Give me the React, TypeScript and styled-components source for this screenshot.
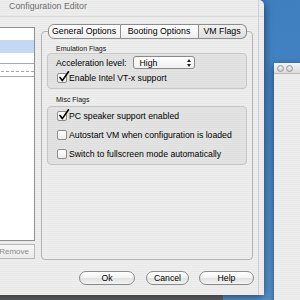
import React from 'react';
import styled, { createGlobalStyle } from 'styled-components';

const Global = createGlobalStyle`
  html, body { margin: 0; padding: 0; }
  body {
    width: 300px; height: 300px; overflow: hidden;
    font-family: "Liberation Sans", Arial, sans-serif;
  }
  #root { width: 300px; height: 300px; }
`;

const Desktop = styled.div`
  position: relative;
  width: 300px;
  height: 300px;
  overflow: hidden;
  background: linear-gradient(180deg, #3f7ebf 0%, #4a89c7 55%, #5796d0 100%);
`;

const pinstripe = `repeating-linear-gradient(180deg, #efefef 0 1px, #e8e8e8 1px 2px)`;

const MainWindow = styled.div`
  position: absolute;
  left: -168px;
  top: 0;
  width: 432px;
  height: 295px;
  display: flex;
  flex-direction: column;
  background: ${pinstripe};
  border-radius: 0 5px 0 0;
  box-shadow: 0 2px 9px rgba(0, 0, 0, 0.55);
  &::after {
    content: '';
    position: absolute;
    top: 0;
    bottom: 0;
    right: 5px;
    width: 1px;
    background: #d0d0d0;
  }
`;

const TitleBar = styled.div`
  height: 13px;
  padding-bottom: 3px;
  display: flex;
  align-items: center;
  justify-content: center;
  border-bottom: 1px solid #dadada;
`;

const Title = styled.span`
  font-size: 8.8px;
  color: #6e6e6e;
  line-height: 13px;
`;

const Body = styled.div`
  flex: 1;
  display: flex;
  flex-direction: column;
  padding: 7px 10px 10px 8px;
`;

const Columns = styled.div`
  display: flex;
  align-items: flex-start;
  gap: 6px;
`;

const Sidebar = styled.div`
  width: 195px;
  margin-top: 3px;
  display: flex;
  flex-direction: column;
  align-items: flex-end;
  gap: 3px;
`;

const List = styled.div`
  width: 100%;
  height: 214px;
  box-sizing: border-box;
  background: #fff;
  border: 1px solid #8e8e8e;
  display: flex;
  flex-direction: column;
`;

const ListRow = styled.div<{ $h: number; $selected?: boolean; $line?: 'solid' | 'dashed' }>`
  height: ${(p) => p.$h}px;
  flex: none;
  background: ${(p) => (p.$selected ? '#c5d8f3' : '#fff')};
  border-bottom: ${(p) => (p.$line ? `1px ${p.$line} #a9a9a9` : 'none')};
`;

const RemoveButton = styled.div`
  height: 15px;
  box-sizing: border-box;
  padding: 0 5px 0 7px;
  border: 1px solid #b9b9b9;
  background: linear-gradient(180deg, #f7f7f7, #ebebeb);
  font-size: 8px;
  line-height: 13px;
  color: #8a8a8a;
`;

const TabView = styled.div`
  width: 212px;
  flex: none;
  display: flex;
  flex-direction: column;
`;

const TabRow = styled.div`
  display: flex;
  justify-content: center;
  position: relative;
  z-index: 1;
`;

const Tab = styled.div<{ $w: number; $active?: boolean; $first?: boolean; $last?: boolean }>`
  width: ${(p) => p.$w}px;
  height: 15px;
  box-sizing: border-box;
  border: 1px solid #8d8d8d;
  border-left: ${(p) => (p.$first ? '1px solid #8d8d8d' : 'none')};
  border-radius: ${(p) => (p.$first ? '6px 0 0 6px' : p.$last ? '0 6px 6px 0' : '0')};
  background: ${(p) =>
    p.$active
      ? 'linear-gradient(180deg, #f2f2f2, #dedede)'
      : 'linear-gradient(180deg, #ffffff, #efefef)'};
  font-size: 8.8px;
  line-height: 13px;
  color: #000;
  text-align: center;
`;

const TabBox = styled.div`
  margin-top: -8px;
  height: 229px;
  box-sizing: border-box;
  border: 1px solid #b3b3b3;
  border-radius: 4px;
  padding: 13px 5px 0;
  display: flex;
  flex-direction: column;
`;

const GroupLabel = styled.div<{ $mt?: number; $mb?: number }>`
  font-size: 7px;
  line-height: 8px;
  color: #111;
  margin: ${(p) => p.$mt ?? 0}px 0 ${(p) => p.$mb ?? 0}px 9px;
`;

const Group = styled.div<{ $gap: number; $pt: number }>`
  box-sizing: border-box;
  border: 1px solid #c6c6c6;
  border-radius: 4px;
  background: rgba(0, 0, 0, 0.045);
  padding: ${(p) => p.$pt}px 8px 5px;
  display: flex;
  flex-direction: column;
  gap: ${(p) => p.$gap}px;
`;

const FieldRow = styled.div`
  display: flex;
  align-items: center;
  gap: 6px;
  height: 13px;
`;

const FieldLabel = styled.span`
  font-size: 8.7px;
  color: #000;
`;

const Popup = styled.div`
  width: 62px;
  height: 13px;
  box-sizing: border-box;
  border: 1px solid #8a8a8a;
  border-radius: 3px;
  background: linear-gradient(180deg, #ffffff, #f0f0f0);
  display: flex;
  align-items: center;
  justify-content: space-between;
  padding: 0 3px 0 6px;
  font-size: 8.7px;
`;

const CheckRow = styled.div`
  display: flex;
  align-items: center;
  gap: 2px;
  height: 10px;
  margin-left: 1px;
`;

const Box = styled.span`
  position: relative;
  width: 10px;
  height: 10px;
  box-sizing: border-box;
  border: 1px solid #8c8c8c;
  border-radius: 2px;
  background: linear-gradient(180deg, #ffffff, #ececec);
  flex: none;
`;

const Check = styled.svg`
  position: absolute;
  left: 0px;
  top: -3px;
`;

const CheckText = styled.span`
  font-size: 8.7px;
  color: #000;
  line-height: 10px;
`;

const ButtonRow = styled.div`
  display: flex;
  justify-content: flex-end;
  margin-top: 11px;
`;

const PushButton = styled.div<{ $w: number; $ml: number }>`
  width: ${(p) => p.$w}px;
  margin-left: ${(p) => p.$ml}px;
  height: 14px;
  box-sizing: border-box;
  border: 1px solid #8b8b8b;
  border-radius: 7px;
  background: linear-gradient(180deg, #ffffff 0%, #f4f4f4 45%, #e2e2e2 55%, #f3f3f3 100%);
  font-size: 8.7px;
  line-height: 12px;
  text-align: center;
  color: #000;
`;

const SideWindow = styled.div`
  position: absolute;
  left: 274px;
  top: 63px;
  width: 60px;
  height: 260px;
  background: ${pinstripe};
  border-radius: 4px 0 0 0;
  box-shadow: 0 2px 7px rgba(0, 0, 0, 0.5);
  display: flex;
  flex-direction: column;
`;

const SideTitle = styled.div`
  height: 10px;
  display: flex;
  align-items: center;
  gap: 2px;
  padding-left: 3px;
  background: linear-gradient(180deg, #f4f4f4, #dcdcdc);
  border-bottom: 1px solid #bdbdbd;
`;

const Light = styled.span`
  width: 7px;
  height: 7px;
  border-radius: 50%;
  box-sizing: border-box;
  border: 1px solid #9a9a9a;
  background: radial-gradient(circle at 50% 35%, #f4f4f4, #bdbdbd);
`;

const DockStrip = styled.div`
  position: absolute;
  left: 0;
  top: 295px;
  width: 223px;
  height: 10px;
  background: linear-gradient(180deg, #6a6e76, #55595f);
`;

const CheckMark = () => (
  <Check width="12" height="12" viewBox="0 0 12 12">
    <path d="M2 6.5 L4.3 9.6 L10.5 0.8" fill="none" stroke="#000" strokeWidth="1.6" strokeLinecap="round" strokeLinejoin="round" />
  </Check>
);

const Option = ({ label, checked }: { label: string; checked?: boolean }) => (
  <CheckRow>
    <Box>{checked && <CheckMark />}</Box>
    <CheckText>{label}</CheckText>
  </CheckRow>
);

export default function App() {
  return (
    <>
      <Global />
      <Desktop>
        <SideWindow>
          <SideTitle>
            <Light />
            <Light />
          </SideTitle>
        </SideWindow>
        <DockStrip />
        <MainWindow>
          <TitleBar>
            <Title>Configuration Editor</Title>
          </TitleBar>
          <Body>
            <Columns>
              <Sidebar>
                <List>
                  <ListRow $h={12} />
                  <ListRow $h={13} $selected />
                  <ListRow $h={10} $line="solid" />
                  <ListRow $h={7} $line="dashed" />
                  <ListRow $h={4} $line="solid" />
                </List>
                <RemoveButton>Remove</RemoveButton>
              </Sidebar>
              <TabView>
                <TabRow>
                  <Tab $w={73} $first>General Options</Tab>
                  <Tab $w={78}>Booting Options</Tab>
                  <Tab $w={48} $last $active>VM Flags</Tab>
                </TabRow>
                <TabBox>
                  <GroupLabel>Emulation Flags</GroupLabel>
                  <Group $gap={4} $pt={2}>
                    <FieldRow>
                      <FieldLabel>Acceleration level:</FieldLabel>
                      <Popup>
                        <span>High</span>
                        <svg width="4" height="8" viewBox="0 0 4 8">
                          <path d="M2 0 L4 3 L0 3 Z M0 5 L4 5 L2 8 Z" fill="#222" />
                        </svg>
                      </Popup>
                    </FieldRow>
                    <Option label="Enable Intel VT-x support" checked />
                  </Group>
                  <GroupLabel $mt={7} $mb={2}>Misc Flags</GroupLabel>
                  <Group $gap={9} $pt={4}>
                    <Option label="PC speaker support enabled" checked />
                    <Option label="Autostart VM when configuration is loaded" />
                    <Option label="Switch to fullscreen mode automatically" />
                  </Group>
                </TabBox>
              </TabView>
            </Columns>
            <ButtonRow>
              <PushButton $w={56} $ml={0}>Ok</PushButton>
              <PushButton $w={43} $ml={11}>Cancel</PushButton>
              <PushButton $w={55} $ml={10}>Help</PushButton>
            </ButtonRow>
          </Body>
        </MainWindow>
      </Desktop>
    </>
  );
}
